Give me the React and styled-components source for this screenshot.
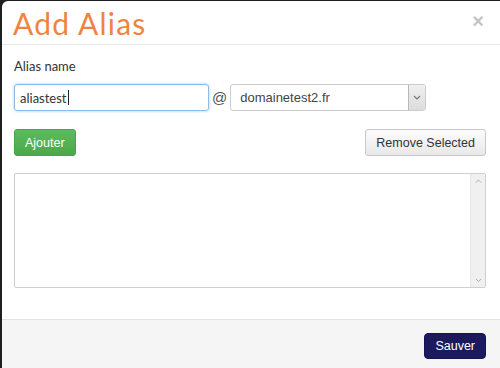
import React from 'react';
import styled, { createGlobalStyle } from 'styled-components';

const GlobalStyle = createGlobalStyle`
  html, body {
    margin: 0;
    padding: 0;
    background: #1f1f1f;
    overflow: hidden;
  }
  body {
    width: 500px;
    height: 368px;
  }
`;

const Dialog = styled.div`
  margin: 1px 0 0 2px;
  width: 498px;
  height: 367px;
  background: #fff;
  border-top-left-radius: 6px;
  display: flex;
  flex-direction: column;
  font-family: 'Liberation Sans', Arial, sans-serif;
`;

const Header = styled.div`
  height: 43px;
  flex: none;
  border-bottom: 1px solid #e8e8e8;
  display: flex;
  align-items: center;
  justify-content: space-between;
  padding: 0 0 0 11px;
`;

const Title = styled.h1`
  margin: 0;
  font-family: Lato, 'Open Sans', sans-serif;
  font-weight: 400;
  font-size: 30px;
  color: #f0843f;
  letter-spacing: 1.2px;
`;

const Close = styled.button`
  border: none;
  background: none;
  padding: 0;
  margin-right: 16px;
  margin-top: -4px;
  color: #c4c4c4;
  font-family: 'Liberation Sans', Arial, sans-serif;
  font-size: 20px;
  font-weight: 700;
  line-height: 1;
  cursor: pointer;
`;

const Body = styled.div`
  flex: none;
  padding: 13px 14px 0 12px;
  height: 275px;
  box-sizing: border-box;
  border-bottom: 1px solid #e3e3e3;
`;

const Label = styled.div`
  font-family: Lato, 'Open Sans', sans-serif;
  font-size: 13px;
  color: #333;
  margin-bottom: 10px;
`;

const InputRow = styled.div`
  display: flex;
  align-items: center;
  gap: 3px;
`;

const TextInput = styled.div`
  width: 195px;
  height: 27px;
  box-sizing: border-box;
  border: 1px solid #8dbbe8;
  border-radius: 3px;
  box-shadow: 0 0 3px rgba(102, 160, 230, 0.6), inset 0 1px 1px rgba(0, 0, 0, 0.05);
  padding: 0 5px;
  display: flex;
  align-items: center;
  font-family: Lato, 'Open Sans', sans-serif;
  font-size: 13px;
  color: #333;
`;

const Caret = styled.span`
  display: inline-block;
  width: 1px;
  height: 15px;
  background: #222;
  margin-left: 1px;
`;

const At = styled.span`
  font-family: 'Liberation Sans', Arial, sans-serif;
  font-size: 15px;
  color: #555;
`;

const Select = styled.div`
  width: 196px;
  height: 27px;
  box-sizing: border-box;
  border: 1px solid #ccc;
  border-radius: 3px;
  display: flex;
  align-items: center;
  justify-content: space-between;
  padding-left: 9px;
  font-size: 13px;
  color: #444;
`;

const Arrow = styled.div`
  width: 16px;
  height: 25px;
  background: linear-gradient(#f0f0f0, #dcdcdc);
  border-left: 1px solid #b8b8b8;
  border-radius: 0 2px 2px 0;
  display: flex;
  align-items: center;
  justify-content: center;
`;

const ButtonRow = styled.div`
  display: flex;
  justify-content: space-between;
  margin-top: 18px;
`;

const Button = styled.button`
  height: 27px;
  box-sizing: border-box;
  padding: 0 10px;
  border-radius: 3px;
  font-family: 'Liberation Sans', Arial, sans-serif;
  font-size: 12.5px;
  cursor: pointer;
  border: 1px solid ${(p) => (p.green ? '#47a447' : '#c8c8c8')};
  color: ${(p) => (p.green ? '#fff' : '#333')};
  background: ${(p) =>
    p.green ? 'linear-gradient(#5fba5f, #4aa84a)' : 'linear-gradient(#fcfcfc, #e8e8e8)'};
`;

const ListBox = styled.div`
  margin-top: 17px;
  height: 115px;
  box-sizing: border-box;
  border: 1px solid #cfcfcf;
  border-radius: 2px;
  display: flex;
  justify-content: flex-end;
`;

const Scrollbar = styled.div`
  width: 14px;
  background: #f0f0f0;
  border-left: 1px solid #e6e6e6;
  display: flex;
  flex-direction: column;
  justify-content: space-between;
  align-items: center;
  padding: 5px 0;
`;

const Footer = styled.div`
  background: #f5f5f5;
  flex: 1;
  padding: 13px 14px 0 0;
  display: flex;
  justify-content: flex-end;
  align-items: flex-start;
`;

const SaveButton = styled.button`
  height: 26px;
  padding: 0 10px;
  border: 1px solid #141450;
  border-radius: 4px;
  background: #1c1a5c;
  color: #fff;
  font-family: 'Liberation Sans', Arial, sans-serif;
  font-size: 12.5px;
  cursor: pointer;
`;

const Chevron = ({ up, color = '#888', size = 8 }) => (
  <svg width={size} height={size / 2 + 1} viewBox="0 0 8 5">
    <path
      d={up ? 'M1 4 L4 1 L7 4' : 'M1 1 L4 4 L7 1'}
      fill="none"
      stroke={color}
      strokeWidth="1.1"
    />
  </svg>
);

export default function App() {
  return (
    <>
      <GlobalStyle />
      <Dialog>
        <Header>
          <Title>Add Alias</Title>
          <Close aria-label="close">×</Close>
        </Header>
        <Body>
          <Label>Alias name</Label>
          <InputRow>
            <TextInput>
              aliastest
              <Caret />
            </TextInput>
            <At>@</At>
            <Select>
              domainetest2.fr
              <Arrow>
                <Chevron color="#777" />
              </Arrow>
            </Select>
          </InputRow>
          <ButtonRow>
            <Button green>Ajouter</Button>
            <Button>Remove Selected</Button>
          </ButtonRow>
          <ListBox>
            <Scrollbar>
              <Chevron up color="#aaa" size={7} />
              <Chevron color="#aaa" size={7} />
            </Scrollbar>
          </ListBox>
        </Body>
        <Footer>
          <SaveButton>Sauver</SaveButton>
        </Footer>
      </Dialog>
    </>
  );
}
